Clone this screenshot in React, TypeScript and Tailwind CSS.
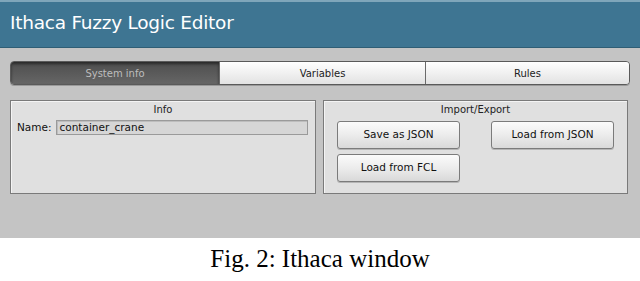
export default function App() {
  const ui = { fontFamily: '"DejaVu Sans", "Open Sans", sans-serif' };

  return (
    <div className="w-[640px] h-[281px] bg-white flex flex-col" style={ui}>
      <div className="h-[238px] flex flex-col bg-[#c4c4c4]">
        {/* title bar */}
        <div className="h-[48px] flex flex-col bg-[#3e7592] border-b border-[#2f5e75]">
          <div className="h-[2px] bg-[#7fa6ba]" />
          <div className="flex-1 flex items-center pl-[10px] pb-[3px] text-[18.5px] text-white tracking-[-0.25px]">
            Ithaca Fuzzy Logic Editor
          </div>
        </div>

        {/* tabs */}
        <div className="mt-[13px] ml-[10px] w-[620px] h-[24px] flex rounded-[4px] border border-[#5a5a5a] overflow-hidden text-[10px] shadow-[0_1px_0_#9a9a9a]">
          <div className="w-[208px] flex items-center justify-center bg-gradient-to-b from-[#4e4e4e] to-[#666666] text-[#bdbdbd] shadow-[inset_0_2px_3px_rgba(0,0,0,0.5)]">
            System info
          </div>
          <div className="w-[206px] flex items-center justify-center bg-gradient-to-b from-[#ffffff] to-[#e2e2e2] text-[#222] border-l border-[#6a6a6a]">
            Variables
          </div>
          <div className="flex-1 flex items-center justify-center bg-gradient-to-b from-[#ffffff] to-[#e2e2e2] text-[#222] border-l border-[#6a6a6a]">
            Rules
          </div>
        </div>

        {/* panels */}
        <div className="mt-[15px] ml-[10px] flex gap-[7px]">
          <div className="w-[306px] h-[94px] bg-[#e0e0e0] border border-[#7a7a7a] shadow-[inset_1px_1px_0_#f4f4f4] flex flex-col">
            <div className="text-center text-[10px] text-[#222] mt-[2px] leading-[14px]">Info</div>
            <div className="flex items-center mt-[3px] ml-[6px] text-[10.5px] text-[#111]">
              <span>Name:</span>
              <div className="ml-[4px] w-[252px] h-[15px] bg-[#d6d6d6] border border-[#9a9a9a] shadow-[inset_1px_1px_0_#bdbdbd] flex items-center pl-[3px] text-[10.5px]">
                container_crane
              </div>
            </div>
          </div>

          <div className="w-[305px] h-[94px] bg-[#e0e0e0] border border-[#7a7a7a] shadow-[inset_1px_1px_0_#f4f4f4] flex flex-col">
            <div className="text-center text-[10px] text-[#222] mt-[2px] leading-[14px]">Import/Export</div>
            <div className="mt-[4px] ml-[13px] grid grid-cols-[123px_123px] gap-x-[31px] gap-y-[5px]">
              <Btn label="Save as JSON" />
              <Btn label="Load from JSON" />
              <Btn label="Load from FCL" />
            </div>
          </div>
        </div>
      </div>

      <div
        className="flex-1 flex items-center justify-center text-[25px] text-black pb-[2px]"
        style={{ fontFamily: '"Liberation Serif", serif' }}
      >
        Fig. 2: Ithaca window
      </div>
    </div>
  );
}

function Btn({ label }: { label: string }) {
  return (
    <div className="h-[28px] flex items-center justify-center rounded-[3px] border border-[#7b7b7b] bg-gradient-to-b from-[#fbfbfb] via-[#ececec] to-[#d9d9d9] text-[10.5px] text-[#111] shadow-[0_1px_0_#b5b5b5]">
      {label}
    </div>
  );
}
